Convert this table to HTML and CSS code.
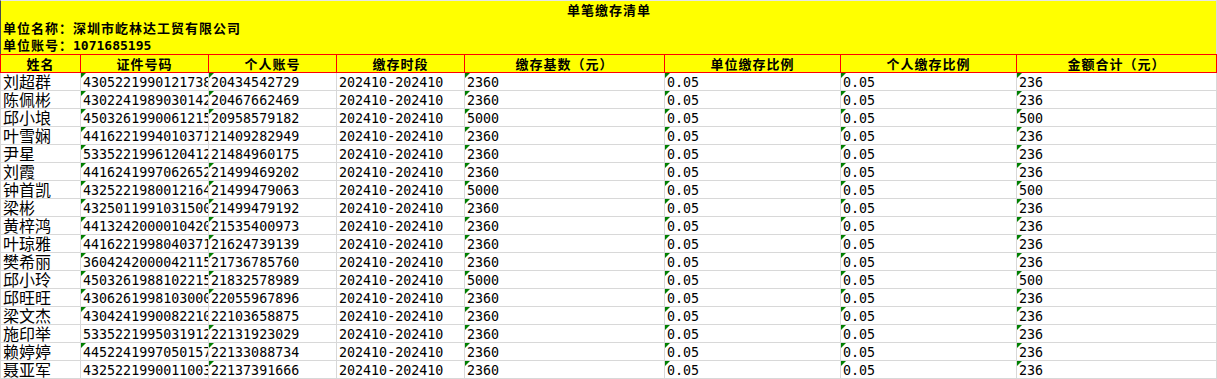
FILE: index.html
```html
<!DOCTYPE html>
<html lang="zh-CN">
<head>
<meta charset="utf-8">
<title>单笔缴存清单</title>
<link rel="stylesheet" href="styles.css">
</head>
<body>
<div class="sheet">
  <div class="banner">
    <div class="banner-title">单笔缴存清单</div>
    <div class="banner-line">单位名称：深圳市屹林达工贸有限公司</div>
    <div class="banner-line">单位账号：<span class="acct-no">1071685195</span></div>
  </div>
  <div class="hdr">
    <div class="hc">姓名</div>
    <div class="hc">证件号码</div>
    <div class="hc">个人账号</div>
    <div class="hc">缴存时段</div>
    <div class="hc">缴存基数（元）</div>
    <div class="hc">单位缴存比例</div>
    <div class="hc">个人缴存比例</div>
    <div class="hc">金额合计（元）</div>
  </div>

  <div class="row"><div class="c name">刘超群</div><div class="c num flag">430522199012173856</div><div class="c num flag">20434542729</div><div class="c num">202410-202410</div><div class="c num flag">2360</div><div class="c num flag">0.05</div><div class="c num flag">0.05</div><div class="c num flag">236</div></div>
  <div class="row"><div class="c name">陈佩彬</div><div class="c num flag">430224198903014231</div><div class="c num flag">20467662469</div><div class="c num">202410-202410</div><div class="c num flag">2360</div><div class="c num flag">0.05</div><div class="c num flag">0.05</div><div class="c num flag">236</div></div>
  <div class="row"><div class="c name">邱小埌</div><div class="c num flag">450326199006121524</div><div class="c num flag">20958579182</div><div class="c num">202410-202410</div><div class="c num flag">5000</div><div class="c num flag">0.05</div><div class="c num flag">0.05</div><div class="c num flag">500</div></div>
  <div class="row"><div class="c name">叶雪娴</div><div class="c num flag">441622199401037126</div><div class="c num">21409282949</div><div class="c num">202410-202410</div><div class="c num flag">2360</div><div class="c num flag">0.05</div><div class="c num flag">0.05</div><div class="c num flag">236</div></div>
  <div class="row"><div class="c name">尹星</div><div class="c num flag">533522199612041215</div><div class="c num">21484960175</div><div class="c num">202410-202410</div><div class="c num flag">2360</div><div class="c num flag">0.05</div><div class="c num flag">0.05</div><div class="c num flag">236</div></div>
  <div class="row"><div class="c name">刘霞</div><div class="c num flag">441624199706265243</div><div class="c num flag">21499469202</div><div class="c num">202410-202410</div><div class="c num flag">2360</div><div class="c num flag">0.05</div><div class="c num flag">0.05</div><div class="c num flag">236</div></div>
  <div class="row"><div class="c name">钟首凯</div><div class="c num flag">432522198001216414</div><div class="c num flag">21499479063</div><div class="c num">202410-202410</div><div class="c num flag">5000</div><div class="c num flag">0.05</div><div class="c num flag">0.05</div><div class="c num flag">500</div></div>
  <div class="row"><div class="c name">梁彬</div><div class="c num flag">432501199103150017</div><div class="c num flag">21499479192</div><div class="c num">202410-202410</div><div class="c num flag">2360</div><div class="c num flag">0.05</div><div class="c num flag">0.05</div><div class="c num flag">236</div></div>
  <div class="row"><div class="c name">黄梓鸿</div><div class="c num flag">441324200001042038</div><div class="c num flag">21535400973</div><div class="c num">202410-202410</div><div class="c num flag">2360</div><div class="c num flag">0.05</div><div class="c num flag">0.05</div><div class="c num flag">236</div></div>
  <div class="row"><div class="c name">叶琼雅</div><div class="c num flag">441622199804037122</div><div class="c num flag">21624739139</div><div class="c num">202410-202410</div><div class="c num flag">2360</div><div class="c num flag">0.05</div><div class="c num flag">0.05</div><div class="c num flag">236</div></div>
  <div class="row"><div class="c name">樊希丽</div><div class="c num flag">360424200004211527</div><div class="c num flag">21736785760</div><div class="c num">202410-202410</div><div class="c num flag">2360</div><div class="c num flag">0.05</div><div class="c num flag">0.05</div><div class="c num flag">236</div></div>
  <div class="row"><div class="c name">邱小玲</div><div class="c num flag">450326198810221548</div><div class="c num flag">21832578989</div><div class="c num">202410-202410</div><div class="c num flag">5000</div><div class="c num flag">0.05</div><div class="c num flag">0.05</div><div class="c num flag">500</div></div>
  <div class="row"><div class="c name">邱旺旺</div><div class="c num flag">430626199810300015</div><div class="c num flag">22055967896</div><div class="c num">202410-202410</div><div class="c num flag">2360</div><div class="c num flag">0.05</div><div class="c num flag">0.05</div><div class="c num flag">236</div></div>
  <div class="row"><div class="c name">梁文杰</div><div class="c num flag">430424199008221019</div><div class="c num">22103658875</div><div class="c num">202410-202410</div><div class="c num flag">2360</div><div class="c num flag">0.05</div><div class="c num flag">0.05</div><div class="c num flag">236</div></div>
  <div class="row"><div class="c name">施印举</div><div class="c num">53352219950319121X</div><div class="c num flag">22131923029</div><div class="c num">202410-202410</div><div class="c num flag">2360</div><div class="c num flag">0.05</div><div class="c num flag">0.05</div><div class="c num flag">236</div></div>
  <div class="row"><div class="c name">赖婷婷</div><div class="c num flag">445224199705015726</div><div class="c num flag">22133088734</div><div class="c num">202410-202410</div><div class="c num flag">2360</div><div class="c num flag">0.05</div><div class="c num flag">0.05</div><div class="c num flag">236</div></div>
  <div class="row"><div class="c name">聂亚军</div><div class="c num">43252219900110031X</div><div class="c num flag">22137391666</div><div class="c num">202410-202410</div><div class="c num flag">2360</div><div class="c num flag">0.05</div><div class="c num flag">0.05</div><div class="c num flag">236</div></div>
</div>
</body>
</html>
```

FILE: styles.css
```css
html, body {
  margin: 0;
  padding: 0;
  background: #ffffff;
}

.sheet {
  width: 1217px;
  color: #000000;
  font-family: "Noto Sans CJK SC", sans-serif;
}

/* yellow banner */
.banner {
  box-sizing: border-box;
  height: 54px;
  background: #ffff00;
  border-top: 1px solid #e6e6e6;
  border-left: 1px solid #4a4a4a;
  border-right: 1px solid #d8d8d8;
  font-size: 13px;
  font-weight: 700;
  letter-spacing: 1px;
  display: flex;
  flex-direction: column;
}

.banner-title,
.banner-line {
  flex: 0 0 auto;
  height: 17.6px;
  line-height: 17px;
  white-space: nowrap;
}

.banner-title {
  text-align: center;
  padding-left: 1px;
}

.banner-line {
  padding-left: 2px;
}

.acct-no {
  font-family: "DejaVu Sans Mono", monospace;
  letter-spacing: 0;
}

/* header row */
.hdr {
  display: grid;
  grid-template-columns: 80px 128px 128px 128px 200px 176px 176px 200px;
  background: #ffff00;
  border-top: 1px solid #ff0000;
  border-bottom: 1px solid #ff0000;
  border-left: 1px solid #ff0000;
}

.hc {
  box-sizing: border-box;
  height: 17px;
  line-height: 17px;
  border-right: 1px solid #ff0000;
  text-align: center;
  font-size: 13px;
  font-weight: 700;
  letter-spacing: 1px;
  white-space: nowrap;
  overflow: hidden;
}

/* data rows */
.row {
  display: grid;
  grid-template-columns: 80px 128px 128px 128px 200px 176px 176px 200px;
  border-left: 1px solid #d8d8d8;
  border-bottom: 1px solid #d8d8d8;
}

.c {
  position: relative;
  box-sizing: border-box;
  height: 17px;
  border-right: 1px solid #d8d8d8;
  padding-left: 2px;
  white-space: nowrap;
  overflow: hidden;
}

.name {
  font-size: 16px;
  line-height: 16px;
}

.num {
  font-family: "DejaVu Sans Mono", monospace;
  font-size: 13.33px;
  line-height: 17px;
  padding-top: 1px;
}

.flag::before {
  content: "";
  position: absolute;
  left: 0;
  top: 0;
  width: 0;
  height: 0;
  border-top: 5px solid #008000;
  border-right: 5px solid transparent;
}
```
